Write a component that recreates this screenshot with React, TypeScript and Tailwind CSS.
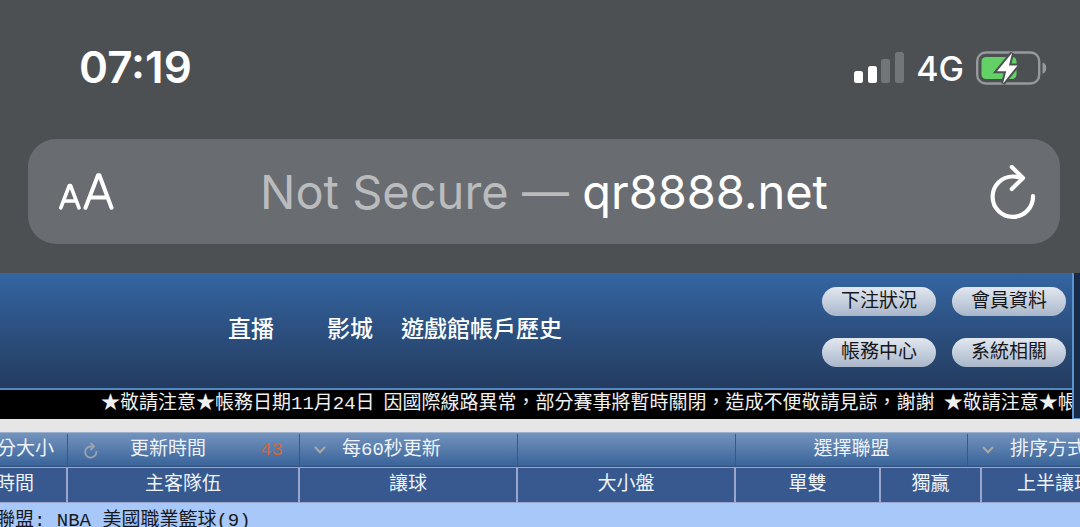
import React from "react";

const notice = [
  "★敬請注意★帳務日期11月24日",
  "因國際線路異常，部分賽事將暫時關閉，造成不便敬請見諒，謝謝",
  "★敬請注意★帳",
];

const memberLinks = ["下注狀況", "會員資料", "帳務中心", "系統相關"];

function SignalIcon() {
  return (
    <svg width="50" height="32" viewBox="0 0 50 32" role="img" aria-label="Signal">
      <rect x="0" y="19" width="9" height="12" rx="2.500" fill="#fff" />
      <rect x="14" y="14" width="9" height="17" rx="2.500" fill="#fff" />
      <rect x="27" y="7" width="9" height="24" rx="2.500" fill="#727679" />
      <rect x="41" y="0" width="9" height="31" rx="2.500" fill="#727679" />
    </svg>
  );
}

function BatteryIcon() {
  return (
    <svg width="72" height="34" viewBox="0 0 72 34" role="img" aria-label="Battery charging">
      <rect x="1.2" y="1.500" width="62" height="31" rx="8.500" fill="none" stroke="#97999c" strokeWidth="2.400" />
      <path d="M66.500 11.500c5 1.200 5 10 0 11.200z" fill="#97999c" />
      <rect x="5.500" y="6" width="35" height="22" rx="4.500" fill="#63d165" />
      <path
        d="M36 2 21 20.200h9.200L27 32.500 41.500 14.500H33z"
        fill="#fff"
        stroke="#4c5053"
        strokeWidth="4"
        strokeLinejoin="miter"
        paintOrder="stroke"
      />
    </svg>
  );
}

function TextSizeIcon() {
  return (
    <svg
      width="58"
      height="38"
      viewBox="0 0 58 38"
      fill="none"
      stroke="#fff"
      strokeLinecap="round"
      strokeLinejoin="round"
    >
      <path d="M4.800 34.800 13.300 12.500h1.200L23 34.800M8 28h12" strokeWidth="3.600" />
      <path d="M29.500 34.800 42 2.200h1.400L55.500 34.800M33.500 24.500h18" strokeWidth="4" />
    </svg>
  );
}

function ReloadIcon() {
  return (
    <svg
      width="46"
      height="54"
      viewBox="0 0 46 54"
      fill="none"
      stroke="#fff"
      strokeWidth="4.200"
      strokeLinecap="round"
      strokeLinejoin="round"
    >
      <path d="M43 31A20.200 20.200 0 1 1 22.800 11.500Q27 11.500 31 12.800" />
      <path d="M21.800 2 33 13 21.800 24" />
    </svg>
  );
}

function SmallReload() {
  return (
    <svg
      className="shrink-0"
      width="14"
      height="17"
      viewBox="0 0 14 17"
      fill="none"
      stroke="#9ca3ad"
      strokeWidth="1.800"
    >
      <path d="M12.200 9A5.600 5.600 0 1 1 6.500 4.500H9.500" />
      <path d="M6.500 1 10 4.500 6.500 8" />
    </svg>
  );
}

function Chevron() {
  return (
    <svg
      className="shrink-0"
      width="12"
      height="8"
      viewBox="0 0 12 8"
      fill="none"
      stroke="#aaaaa6"
      strokeWidth="2"
    >
      <path d="M1 1 6 6.200 11 1" />
    </svg>
  );
}

function ToolSelect({ label, value }: { label: string; value: string }) {
  return (
    <label className="relative flex min-w-0 items-center gap-4 overflow-hidden border-l border-[#365a86] pl-[14px]">
      <span className="sr-only">{label}</span>
      <Chevron />
      <select className="w-32 shrink-0 appearance-none bg-transparent text-[19px] leading-6 text-[#eef3fa] outline-none">
        <option>{value}</option>
      </select>
    </label>
  );
}

const cell = "border-l-2 border-[#9aa6cc] p-0 text-center font-normal";

export default function App() {
  return (
    <div
      lang="zh-Hant"
      className="flex h-screen w-full flex-col overflow-hidden bg-[#a7c8f8] font-['Liberation_Mono','Noto_Sans_CJK_TC',monospace]"
    >
      <header className="shrink-0 bg-[#4c5053] px-5 pb-[29px] pl-7 font-['Inter',sans-serif] text-white">
        <div className="flex h-[139px] items-start justify-between pr-3 pl-[51px] pt-11">
          <time className="text-[44px] leading-[46px] font-semibold">07:19</time>
          <div className="flex items-center gap-3 pt-[5px]">
            <SignalIcon />
            <span className="pt-0.5 text-[34px] leading-9 font-medium">4G</span>
            <BatteryIcon />
          </div>
        </div>
        <div className="grid h-[105px] grid-cols-[1fr_auto_1fr] items-center rounded-[28px] bg-[#696c71] px-7">
          <button type="button" aria-label="Page settings" className="justify-self-start">
            <TextSizeIcon />
          </button>
          <button type="button" className="text-[47px] leading-[56px] whitespace-nowrap">
            <span className="text-[#b9bbbd]">Not Secure — </span>
            <span>qr8888.net</span>
          </button>
          <button type="button" aria-label="Reload" className="-mr-1 justify-self-end">
            <ReloadIcon />
          </button>
        </div>
      </header>

      <div className="flex shrink-0 bg-[#182c47]">
        <div className="min-w-0 flex-1 border-r-2 border-[#5b92cf]">
          <div className="flex h-[117px] items-center justify-between border-b-2 border-[#4f8ac8] bg-linear-to-b from-[#3465a2] to-[#243c5f] pr-1.5 pl-[228px]">
            <nav className="flex text-[23px] leading-8 font-medium whitespace-nowrap text-white">
              <a href="#live" className="mr-[53px]">直播</a>
              <a href="#movies" className="mr-7">影城</a>
              <a href="#games">遊戲館</a>
              <a href="#history">帳戶歷史</a>
            </nav>
            <div className="grid grid-cols-2 gap-x-4 gap-y-[22px] pb-2">
              {memberLinks.map((label) => (
                <button
                  key={label}
                  type="button"
                  className="h-[29px] w-[114px] rounded-full bg-linear-to-b from-[#e3e8f0] to-[#a9b6ca] pt-0.5 text-[19px] leading-[27px] text-[#15171a]"
                >
                  {label}
                </button>
              ))}
            </div>
          </div>
          <div className="flex h-[29px] gap-[9px] overflow-hidden bg-black pl-[101px] text-[19px] leading-[29px] whitespace-nowrap text-[#f0f0f0]">
            {notice.map((part) => (
              <span key={part}>{part}</span>
            ))}
          </div>
        </div>
        <div className="w-[6px] border-b border-[#5b92cf]" />
      </div>

      <div className="h-[13px] shrink-0 bg-[#e6e6e6]" />

      <div className="grid h-[35px] shrink-0 grid-cols-[67px_232px_218px_218px_232px_1fr] border-t border-b border-t-[#9db2cf] border-b-[#31517b] bg-linear-to-b from-[#7494bd] to-[#39639a] pt-px text-[19px] leading-6 whitespace-nowrap text-[#eef3fa]">
        <button type="button" className="flex items-center justify-end overflow-hidden pr-[13px]">
          分大小
        </button>
        <button type="button" className="flex items-center border-l border-[#365a86] pr-4 pl-4">
          <SmallReload />
          <span className="ml-8">更新時間</span>
          <span className="ml-auto text-[#d2692f]">43</span>
        </button>
        <ToolSelect label="更新頻率" value="每60秒更新" />
        <div className="border-l border-[#365a86]" />
        <button type="button" className="border-l border-[#365a86]">選擇聯盟</button>
        <ToolSelect label="排序" value="排序方式" />
      </div>

      <table className="w-full shrink-0 table-fixed border-collapse whitespace-nowrap">
        <colgroup>
          <col className="w-[67px]" />
          <col className="w-[232px]" />
          <col className="w-[218px]" />
          <col className="w-[218px]" />
          <col className="w-[145px]" />
          <col className="w-[101px]" />
          <col />
        </colgroup>
        <thead>
          <tr className="h-[35px] border-t border-b border-[#9aa6cc] bg-[#38598f] text-[19px] leading-6 text-[#eef3fa]">
            <th className="p-0 font-normal">
              <div className="flex justify-end pr-8">時間</div>
            </th>
            <th className={cell}>主客隊伍</th>
            <th className={cell}>讓球</th>
            <th className={cell}>大小盤</th>
            <th className={cell}>單雙</th>
            <th className={cell}>獨贏</th>
            <th className="overflow-hidden border-l-2 border-[#9aa6cc] p-0 pl-[35px] text-left font-normal">
              上半讓球
            </th>
          </tr>
        </thead>
        <tbody>
          <tr className="bg-[#a7c8f8] text-[19px] leading-9 text-[#16191d]">
            <td colSpan={7} className="p-0">
              <div className="-ml-1">聯盟: NBA 美國職業籃球(9)</div>
            </td>
          </tr>
        </tbody>
      </table>
    </div>
  );
}
